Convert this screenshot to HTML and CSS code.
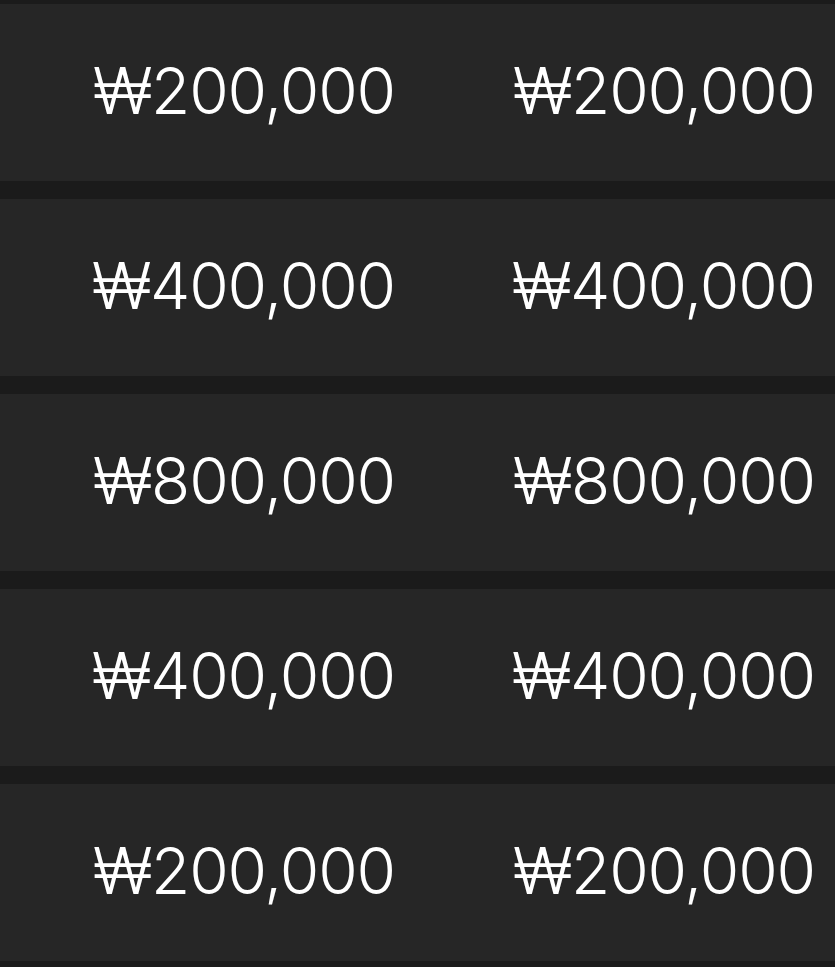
FILE: index.html
```html
<!DOCTYPE html>
<html lang="ko">
<head>
    <meta charset="UTF-8">
    <meta name="viewport" content="width=device-width, initial-scale=1.0">
    <title>금액 목록</title>
    <link rel="stylesheet" href="styles.css">
</head>
<body>
    <div class="list">
        <div class="row">
            <span class="cell">₩200,000</span>
            <span class="cell">₩200,000</span>
        </div>
        <div class="row">
            <span class="cell">₩400,000</span>
            <span class="cell">₩400,000</span>
        </div>
        <div class="row">
            <span class="cell">₩800,000</span>
            <span class="cell">₩800,000</span>
        </div>
        <div class="row">
            <span class="cell">₩400,000</span>
            <span class="cell">₩400,000</span>
        </div>
        <div class="row">
            <span class="cell">₩200,000</span>
            <span class="cell">₩200,000</span>
        </div>
    </div>
</body>
</html>
```

FILE: styles.css
```css
body {
    margin: 0;
    padding-top: 4px;
    background-color: #1b1b1b;
    font-family: Inter, "Noto Sans CJK KR", sans-serif;
    color: #ffffff;
}
.list {
    display: flex;
    flex-direction: column;
    gap: 18px;
}
.row {
    display: grid;
    grid-template-columns: 1fr 420px;
    height: 177px;
    align-items: center;
    background-color: #262626;
}
.cell {
    text-align: right;
    padding-right: 20px;
    padding-bottom: 4px;
    font-size: 64px;
    font-weight: 350;
    letter-spacing: -1.1px;
    line-height: 1;
}
```
